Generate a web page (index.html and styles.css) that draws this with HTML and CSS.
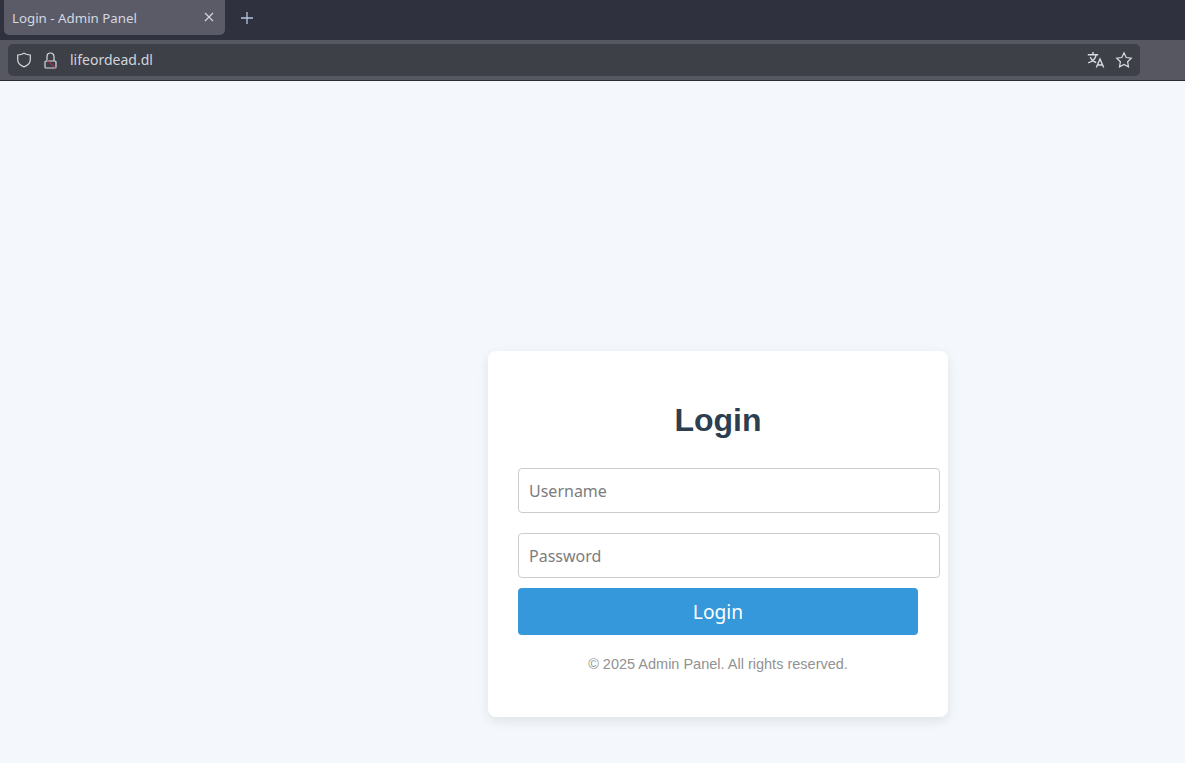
FILE: index.html
```html
<!DOCTYPE html>
<html lang="en">
<head>
<meta charset="utf-8">
<title>Login - Admin Panel</title>
<link rel="stylesheet" href="styles.css">
</head>
<body>
<header class="browser">
  <div class="tabbar">
    <div class="tab">
      <span class="tab-title">Login - Admin Panel</span>
      <svg class="tab-close" width="10" height="10" viewBox="0 0 10 10"><path d="M1 1l8 8M9 1l-8 8"/></svg>
    </div>
    <svg class="tab-new" width="14" height="14" viewBox="0 0 14 14"><path d="M7 1v12M1 7h12"/></svg>
  </div>
  <div class="toolbar">
    <div class="urlbar">
      <svg class="ico" width="16" height="16" viewBox="0 0 16 16"><path d="M8 1.200c2 1.200 4 1.700 6.300 1.800v4.500c0 3.400-2.400 6-6.300 7.400-3.900-1.400-6.300-4-6.300-7.400V3C4 2.900 6 2.400 8 1.200z"/></svg>
      <svg class="ico lock" width="16" height="18" viewBox="0 0 16 18"><path d="M5 9V4.500a3.500 3.500 0 0 1 7 0V9M4 9h9a1 1 0 0 1 1 1v5a1 1 0 0 1-1 1H4a1 1 0 0 1-1-1v-5a1 1 0 0 1 1-1z"/><path class="slash" d="M5 8l9 8.500"/></svg>
      <span class="url">lifeordead.dl</span>
      <span class="spacer"></span>
      <svg class="ico translate" width="18" height="18" viewBox="0 0 18 18"><path d="M.8 3.700h10.400M6 1v2.700M9.200 3.700c-.6 3.700-3.500 6.800-8 8.200M3.300 6c1 2.700 3.200 4.500 5.900 5.500M9.300 16.500l3.700-8.500 3.700 8.500M10.700 14h4.600"/></svg>
      <svg class="ico" width="18" height="18" viewBox="0 0 18 18"><path d="M9 1.800l2.200 4.700 5.100.7-3.700 3.500.9 5.100L9 13.400l-4.500 2.400.9-5.100-3.700-3.500 5.100-.7z"/></svg>
    </div>
  </div>
</header>
<main class="page">
  <form class="card">
    <h1 class="title">Login</h1>
    <input class="field" type="text" placeholder="Username">
    <input class="field" type="password" placeholder="Password">
    <button class="submit" type="button">Login</button>
    <p class="note">© 2025 Admin Panel. All rights reserved.</p>
  </form>
</main>
</body>
</html>
```
FILE: styles.css
```css
* { box-sizing: border-box; }
html, body { margin: 0; height: 100%; }
body {
  display: flex;
  flex-direction: column;
  height: 763px;
  overflow: hidden;
  background: #f4f7fc;
  font-family: "Noto Sans", sans-serif;
}
.browser { flex: none; }
.tabbar {
  height: 40px;
  background: #2f323e;
  display: flex;
  align-items: flex-start;
  padding-left: 4px;
}
.tab {
  width: 221px;
  height: 35px;
  background: #5a5b67;
  border-radius: 0 0 5px 5px;
  display: flex;
  align-items: center;
  justify-content: space-between;
  padding: 0 11px 0 8px;
  color: #d3d8e2;
  font-size: 13.3px;
}
.tab-close { fill: none; stroke: #d5d8df; stroke-width: 1.1; margin-top: -2px; }
.tab-new { fill: none; stroke: #b4c8e2; stroke-width: 1.3; margin: 11px 0 0 15px; }
.toolbar {
  height: 41px;
  background: #565761;
  border-bottom: 1px solid #2b2d36;
  padding: 4px 45px 4px 8px;
}
.urlbar {
  height: 32px;
  background: #3e4048;
  border-radius: 5px;
  display: flex;
  align-items: center;
  padding: 0 7px 0 8px;
  color: #d0d4dc;
}
.ico { fill: none; stroke: #d6dae2; stroke-width: 1.2; flex: none; }
.lock { margin-left: 12px; margin-top: 1px; }
.slash { stroke: #f0244a; stroke-width: 0.9; }
.translate { stroke-width: 1.4; }
.url { font-size: 14px; line-height: 32px; }
.spacer { flex: 1; }
.ico + .ico { margin-left: 10px; }
.lock + .url { margin-left: 10px; }
.page {
  flex: 1;
  padding: 270px 0 0 488px;
}
.card {
  width: 460px;
  height: 366px;
  background: #fff;
  border-radius: 8px;
  box-shadow: 0 4px 12px rgba(0, 0, 0, 0.09);
  padding: 30px;
  font-family: "Liberation Sans", Arial, sans-serif;
}
.title {
  margin: 21px 0 29px;
  text-align: center;
  font-size: 32px;
  line-height: 37px;
  font-weight: 700;
  color: #2c3e50;
}
.field {
  display: block;
  width: 422px;
  height: 45px;
  margin-bottom: 20px;
  padding: 0 10px;
  border: 1px solid #ccc;
  border-radius: 4px;
  background: #fff;
  font-family: "Noto Sans", sans-serif;
  font-size: 16px;
  color: #333;
}
.field::placeholder { color: #7d7d7d; opacity: 1; }
.field + .field { margin-bottom: 10px; }
.submit {
  display: block;
  width: 400px;
  height: 47px;
  border: 0;
  border-radius: 4px;
  background: #3498db;
  color: #fff;
  font-family: "Noto Sans", sans-serif;
  font-size: 19.2px;
}
.note {
  margin: 21px 0 0;
  width: 400px;
  text-align: center;
  font-size: 14.5px;
  line-height: 17px;
  color: #929292;
}
.lock + .url { margin-left: 12px; }
```
